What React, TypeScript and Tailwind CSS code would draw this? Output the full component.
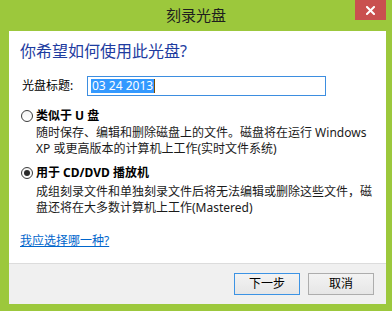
import { useState } from "react";

const font = "font-['Noto_Sans','Noto_Sans_CJK_SC',sans-serif]";

function Radio({ checked }: { checked: boolean }) {
    return (
        <span className="size-[12px] rounded-full border border-[#3c3c3c] bg-gradient-to-b from-[#f4f4f4] to-white flex items-center justify-center shrink-0">
            {checked && <span className="size-[6px] rounded-full bg-[#2a2a2a]" />}
        </span>
    );
}

function Option({ checked, label, lines, descGap }: { checked: boolean; label: string; lines: string[]; descGap: string }) {
    return (
        <div>
            <div className="flex items-center gap-[3px] pl-[12px] h-[16px]">
                <Radio checked={checked} />
                <span className="font-bold text-[12px] leading-[16px] text-black">{label}</span>
            </div>
            <div className={`pl-[27px] text-[12px] leading-[16px] text-[#1a1a1a] whitespace-nowrap ${descGap}`}>
                {lines.map((l) => (
                    <div key={l}>{l}</div>
                ))}
            </div>
        </div>
    );
}

export default function App() {
    const [title] = useState("03 24 2013");

    return (
        <div className={`w-[392px] h-[311px] bg-[#9cc83c] flex flex-col overflow-hidden ${font}`}>
            <div className="relative h-[31px] shrink-0">
                <div className="pt-[5px] text-center text-[15px] leading-[20px] text-[#1e1e1e]">刻录光盘</div>
                <div className="absolute left-[355px] top-0 w-[31px] h-[20px] bg-[#c9504f] flex items-center justify-center">
                    <svg width="9" height="9" viewBox="0 0 9 9">
                        <path d="M1 1 L8 8 M8 1 L1 8" stroke="#fff" strokeWidth="2" strokeLinecap="square" />
                    </svg>
                </div>
            </div>

            <div className="ml-[9px] w-[377px] h-[273px] bg-white flex flex-col">
                <div className="flex-1 flex flex-col">
                    <div className="pt-[9px] pl-[11px] text-[16px] leading-[22px] text-[#1e3ca0]">你希望如何使用此光盘?</div>

                    <div className="mt-[14px] flex items-center h-[20px]">
                        <span className="pl-[13px] w-[78px] text-[12px] text-black">光盘标题:</span>
                        <div className="w-[239px] h-[20px] border border-[#3d8ee0] flex items-center pl-[3px]">
                            <span className="bg-[#3399ff] text-white text-[12px] leading-[14px] px-[1px]">{title}</span>
                            <span className="w-px h-[14px] bg-[#7a4a00]" />
                        </div>
                    </div>

                    <div className="mt-[12px]">
                        <Option
                            checked={false}
                            label="类似于 U 盘"
                            descGap="mt-[1px]"
                            lines={["随时保存、编辑和删除磁盘上的文件。磁盘将在运行 Windows", "XP 或更高版本的计算机上工作(实时文件系统)"]}
                        />
                    </div>

                    <div className="mt-[8px]">
                        <Option
                            checked={true}
                            label="用于 CD/DVD 播放机"
                            descGap="mt-[3px]"
                            lines={["成组刻录文件和单独刻录文件后将无法编辑或删除这些文件，磁", "盘还将在大多数计算机上工作(Mastered)"]}
                        />
                    </div>

                    <a href="#" className="mt-[17px] pl-[11px] text-[12px] leading-[16px] text-[#0066cc] underline w-fit">
                        我应选择哪一种?
                    </a>
                </div>

                <div className="h-[41px] shrink-0 border-t border-[#dcdcdc] bg-[#f0f0f0] flex items-center justify-end gap-[8px] pr-[12px]">
                    <button className="w-[66px] h-[22px] border border-[#3c93e4] bg-gradient-to-b from-[#f3f3f3] to-[#e6e6e6] text-[12px] text-black">
                        下一步
                    </button>
                    <button className="w-[66px] h-[22px] border border-[#adadad] bg-gradient-to-b from-[#f3f3f3] to-[#e6e6e6] text-[12px] text-black">
                        取消
                    </button>
                </div>
            </div>
        </div>
    );
}
